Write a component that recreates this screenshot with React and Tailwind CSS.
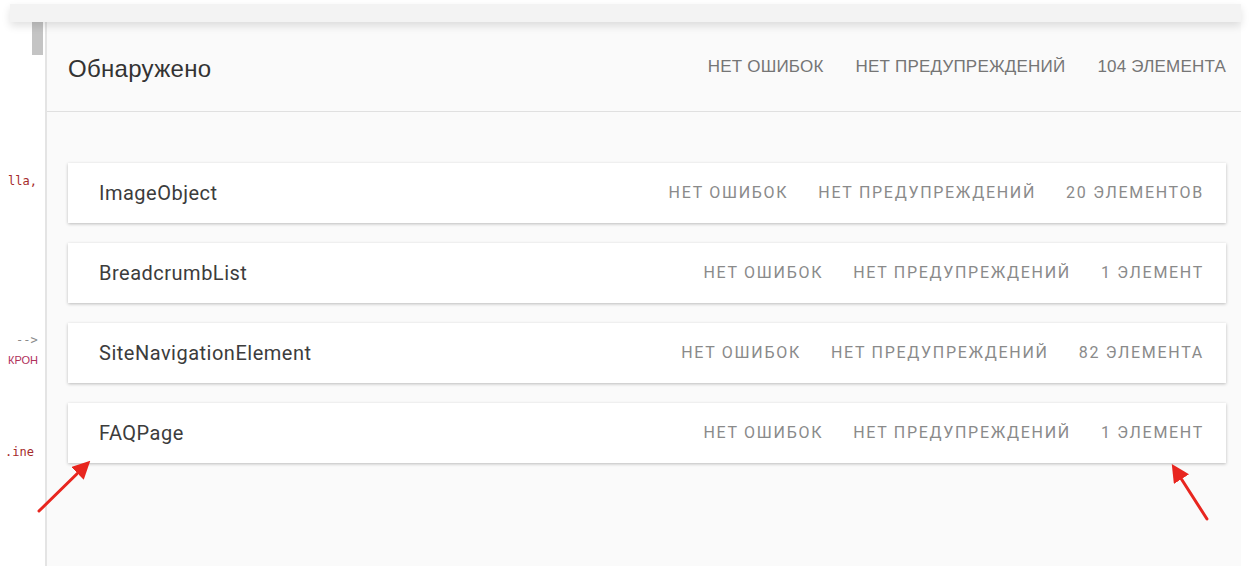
import React from "react";

const items = [
  { name: "ImageObject", count: "20 ЭЛЕМЕНТОВ" },
  { name: "BreadcrumbList", count: "1 ЭЛЕМЕНТ" },
  { name: "SiteNavigationElement", count: "82 ЭЛЕМЕНТА" },
  { name: "FAQPage", count: "1 ЭЛЕМЕНТ" },
];

function Card({ name, count }) {
  return (
    <div className="h-[60px] bg-white flex items-center pl-[31px] pr-[22px] shadow-[0_1px_3px_rgba(0,0,0,0.25)]">
      <div className="text-[20px] text-[#3c3c3c] tracking-[0.5px] font-['Roboto',sans-serif]">{name}</div>
      <div className="ml-auto flex items-center gap-[30px] text-[16px] text-[#8a8a8a] tracking-[1.7px] font-['Roboto',sans-serif]">
        <span>НЕТ ОШИБОК</span>
        <span>НЕТ ПРЕДУПРЕЖДЕНИЙ</span>
        <span>{count}</span>
      </div>
    </div>
  );
}

export default function App() {
  return (
    <div className="relative w-[1251px] h-[576px] bg-white overflow-hidden">
      <div className="flex flex-col h-full">
        <div className="mt-[4px] mx-[10px] h-[18px] bg-[#f3f3f3] relative z-10 shadow-[0_4px_8px_rgba(0,0,0,0.12)]" />
        <div className="flex h-[544px] mr-[10px]">
          <div className="w-[45px] bg-white relative font-['DejaVu_Sans_Mono',monospace] text-[12px] leading-none">
            <div className="absolute left-[32px] top-0 w-[11px] h-[33px] bg-[#c4c4c4]" />
            <div className="absolute left-[8px] top-[153px] text-[#a52a2a]">lla,</div>
            <div className="absolute left-[16px] top-[312px] text-[#8a8a8a]">--&gt;</div>
            <div className="absolute left-[8px] top-[333px] text-[#b0305a] font-['Liberation_Sans',sans-serif] text-[11px]">КРОН</div>
            <div className="absolute left-[5px] top-[424px] text-[#a52a2a]">.ine</div>
          </div>
          <div className="w-[2px] bg-[#e4e4e4]" />
          <div className="flex-1 bg-[#fafafa] flex flex-col">
            <div className="h-[90px] border-b border-[#e0e0e0] flex items-center pl-[21px] pr-[15px]">
              <div className="text-[24px] text-[#333] font-['Liberation_Sans',sans-serif] tracking-[0.3px] pt-[4px]">Обнаружено</div>
              <div className="ml-auto flex items-center gap-[32px] text-[17px] text-[#757575] font-['Liberation_Sans',sans-serif] tracking-[0.2px]">
                <span>НЕТ ОШИБОК</span>
                <span>НЕТ ПРЕДУПРЕЖДЕНИЙ</span>
                <span>104 ЭЛЕМЕНТА</span>
              </div>
            </div>
            <div className="pt-[51px] pl-[21px] pr-[15px] flex flex-col gap-[20px]">
              {items.map((it) => (
                <Card key={it.name} {...it} />
              ))}
            </div>
          </div>
        </div>
      </div>
      <svg className="absolute inset-0 pointer-events-none" width="1251" height="576">
        <defs>
          <marker id="ah" markerWidth="6" markerHeight="6" refX="4" refY="3" orient="auto" markerUnits="strokeWidth">
            <path d="M0,0 L6,3 L0,6 Z" fill="#e8261f" />
          </marker>
        </defs>
        <line x1="39" y1="511" x2="86" y2="465" stroke="#e8261f" strokeWidth="3" strokeLinecap="round" markerEnd="url(#ah)" />
        <line x1="1207" y1="519" x2="1175" y2="469" stroke="#e8261f" strokeWidth="3" strokeLinecap="round" markerEnd="url(#ah)" />
      </svg>
    </div>
  );
}
